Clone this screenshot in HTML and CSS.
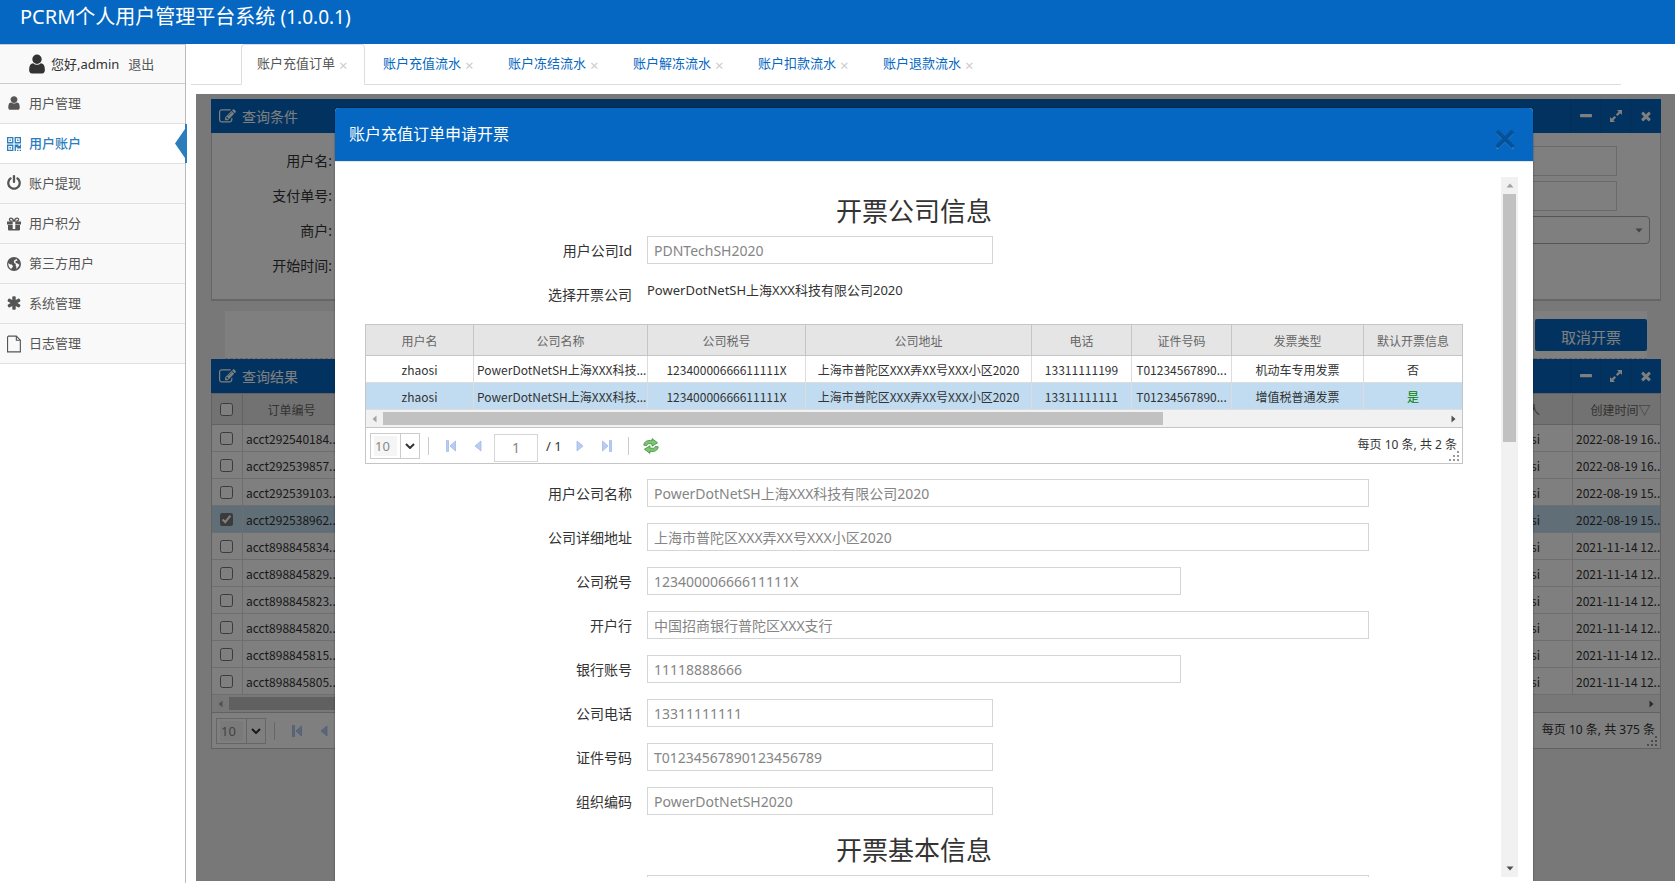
FILE: index.html
```html
<!DOCTYPE html>
<html lang="zh-CN">
<head>
<meta charset="utf-8">
<title>PCRM个人用户管理平台系统</title>
<link rel="stylesheet" href="styles.css">
</head>
<body>
<svg class="sprite" aria-hidden="true">
  <symbol id="i-user" viewBox="0 0 1792 1792"><path d="M1536 1399q0 109-62.5 187t-150.5 78h-854q-88 0-150.5-78t-62.5-187q0-85 8.5-160.5t31.5-152 58.5-131 94-89 134.5-34.5q131 128 313 128t313-128q76 0 134.5 34.5t94 89 58.5 131 31.5 152 8.5 160.5zm-256-887q0 159-112.5 271.5t-271.5 112.5-271.5-112.5-112.5-271.5 112.5-271.5 271.5-112.5 271.5 112.5 112.5 271.5z"/></symbol>
  <symbol id="i-qrcode" viewBox="0 0 14 14"><path fill-rule="evenodd" d="M0 0h6.400v6.400H0zM1.300 1.300v3.800h3.800V1.300zM2.500 2.500h1.400v1.400H2.500zM7.600 0H14v6.400H7.600zM8.900 1.300v3.800h3.800V1.300zM10.100 2.500h1.400v1.400h-1.400zM0 7.600h6.400V14H0zM1.300 8.900v3.800h3.800V8.900zM2.500 10.100h1.400v1.400H2.500zM7.600 7.600h3.900v1.300h1.300V7.600H14v3.900h-3.800v-1.300H8.900V14H7.600zM10.200 12.700h1.300V14h-1.300zM12.700 12.700H14V14h-1.300z"/></symbol>
  <symbol id="i-power" viewBox="0 0 1792 1792"><path d="M1664 896q0 156-61 298t-164 245-245 164-298 61-298-61-245-164-164-245-61-298q0-182 80.500-343t226.500-270q43-32 95.500-25t83.500 50q32 42 24.500 94.500t-49.500 84.500q-98 74-151.500 181t-53.500 228q0 104 40.500 198.500t109.500 163.500 163.500 109.500 198.500 40.500 198.500-40.500 163.500-109.500 109.500-163.500 40.500-198.500q0-121-53.500-228t-151.500-181q-42-32-49.500-84.500t24.500-94.500q31-43 84-50t95 25q146 109 226.500 270t80.500 343zm-640-768v640q0 52-38 90t-90 38-90-38-38-90v-640q0-52 38-90t90-38 90 38 38 90z"/></symbol>
  <symbol id="i-gift" viewBox="0 0 14 14"><path fill-rule="evenodd" d="M1 8h4.700v5.500H2a1 1 0 0 1-1-1zM8.300 8H13v4.500a1 1 0 0 1-1 1H8.300zM0 4.500h5.700V7.500H0zM8.300 4.500H14V7.500H8.300zM5.700 12h2.600v1.500H5.700zM4 .5c1.300 0 2.200.9 3 2.200C7.800 1.400 8.700.5 10 .5c1.300 0 2.200.9 2.200 2.100S11.200 4.700 10 4.700H4C2.800 4.700 1.800 3.800 1.800 2.600S2.700.5 4 .5zM4 1.700c-.6 0-1 .4-1 .9s.4.900 1 .9h1.900C5.300 2.500 4.700 1.700 4 1.700zM10 1.700c-.7 0-1.300.8-1.900 1.800H10c.6 0 1-.4 1-.9s-.4-.9-1-.9z"/></symbol>
  <symbol id="i-globe" viewBox="0 0 14 14"><path fill-rule="evenodd" d="M7 0a7 7 0 1 1 0 14A7 7 0 0 1 7 0zM9 1.600l1.200 1.300.2 1.200-1.200-.4-.9 1 .5 1.200 1.500.3 1 1.300 1-.7c0 2.300-1.300 4.200-3.300 5.100l.5-1.900-.9-1.400.3-1.500-1.500-.9-.6-1.600.6-1.300 1.400-.8zM1.400 6l1.300 1.200 1.900.4 1.400 1.300-.6 1.500-1 .9.100 1C2.500 11.300 1.300 9.200 1.300 7z"/></symbol>
  <symbol id="i-asterisk" viewBox="0 0 1792 1792"><path d="M1546 1050q46 26 59.500 77.500t-12.500 97.500l-64 110q-26 46-77.500 59.500t-97.500-12.500l-266-153v307q0 52-38 90t-90 38h-128q-52 0-90-38t-38-90v-307l-266 153q-46 26-97.500 12.500t-77.500-59.500l-64-110q-26-46-12.500-97.500t59.500-77.500l266-154-266-154q-46-26-59.500-77.500t12.500-97.500l64-110q26-46 77.500-59.500t97.500 12.500l266 153v-307q0-52 38-90t90-38h128q52 0 90 38t38 90v307l266-153q46-26 97.500-12.500t77.500 59.500l64 110q26 46 12.500 97.500t-59.500 77.500l-266 154z"/></symbol>
  <symbol id="i-file" viewBox="0 0 15 18"><path d="M1.500.600h8.500l4.300 4.300v12.500H.600V1.500zM10 .600v4.400h4.400" fill="none" stroke="currentColor" stroke-width="1.200"/></symbol>
  <symbol id="i-edit" viewBox="0 0 1792 1792"><path d="M888 1184l116-116-152-152-116 116v56h96v96h56zm440-720q-16-16-33 1l-350 350q-17 17-1 33t33-1l350-350q17-17 1-33zm80 594v190q0 119-84.500 203.500t-203.500 84.500h-832q-119 0-203.500-84.500t-84.500-203.500v-832q0-119 84.500-203.500t203.500-84.500h832q63 0 117 25 15 7 18 23 3 17-9 29l-49 49q-14 14-32 8-23-6-45-6h-832q-66 0-113 47t-47 113v832q0 66 47 113t113 47h832q66 0 113-47t47-113v-126q0-13 9-22l64-64q15-15 35-7t20 29zm-96-738l288 288-672 672h-288v-288zm444 132l-92 92-288-288 92-92q28-28 68-28t68 28l152 152q28 28 28 68t-28 68z"/></symbol>
  <symbol id="i-minus" viewBox="0 0 14 14"><path d="M2 5h10a1 1 0 0 1 1 1v1.500a.7.7 0 0 1-.7.700H1.700a.7.7 0 0 1-.7-.7V6a1 1 0 0 1 1-1z"/></symbol>
  <symbol id="i-expand" viewBox="0 0 14 14"><path d="M8 1h5v5l-1.700-1.700-2.800 2.800-1.600-1.600 2.800-2.800zM6 13H1V8l1.700 1.700 2.800-2.800 1.600 1.600-2.800 2.800z"/></symbol>
  <symbol id="i-times" viewBox="0 0 1792 1792"><path d="M1490 1322q0 40-28 68l-136 136q-28 28-68 28t-68-28l-294-294-294 294q-28 28-68 28t-68-28l-136-136q-28-28-28-68t28-68l294-294-294-294q-28-28-28-68t28-68l136-136q28-28 68-28t68 28l294 294 294-294q28-28 68-28t68 28l136 136q28 28 28 68t-28 68l-294 294 294 294q28 28 28 68z"/></symbol>
  <symbol id="i-prev" viewBox="0 0 16 16"><path d="M11 3v10L5 8z" fill="#b9ccf2" stroke="#a3b9ea" stroke-width=".8"/></symbol>
  <symbol id="i-first" viewBox="0 0 16 16"><path d="M3.500 2.500h2v11h-2zM12.500 3v10L7 8z" fill="#b9ccf2" stroke="#a3b9ea" stroke-width=".8"/></symbol>
  <symbol id="i-next" viewBox="0 0 16 16"><path d="M5 3v10l6-5z" fill="#b9ccf2" stroke="#a3b9ea" stroke-width=".8"/></symbol>
  <symbol id="i-last" viewBox="0 0 16 16"><path d="M10.500 2.500h2v11h-2zM3.500 3v10L9 8z" fill="#b9ccf2" stroke="#a3b9ea" stroke-width=".8"/></symbol>
  <symbol id="i-refresh" viewBox="0 0 16 16"><path d="M.8 7.200C1 3.600 4.600 1.800 9 2.600V.600l5.600 4.200L9 8.200V6C6 5.200 4.400 5.700 3.800 7.500zM15.200 8.800c-.2 3.600-3.800 5.400-8.200 4.600v2L1.400 11.200 7 7.800V10c3 .8 4.600.3 5.200-1.500z" fill="#7cc472" stroke="#3f8f3c" stroke-width=".8"/></symbol>
  <symbol id="i-grip" viewBox="0 0 10 10"><path d="M8 0h2v2H8zM4 4h2v2H4zM8 4h2v2H8zM0 8h2v2H0zM4 8h2v2H4zM8 8h2v2H8z"/></symbol>
  <symbol id="i-left" viewBox="0 0 5 8"><path d="M4.500.500v7L.500 4z"/></symbol>
  <symbol id="i-right" viewBox="0 0 5 8"><path d="M.500.500v7l4-3.500z"/></symbol>
  <symbol id="i-up" viewBox="0 0 8 5"><path d="M.500 4.500h7L4 .500z"/></symbol>
  <symbol id="i-down" viewBox="0 0 8 5"><path d="M.500.500h7L4 4.500z"/></symbol>
</svg>

<header class="topbar"><h1>PCRM个人用户管理平台系统 <small>(1.0.0.1)</small></h1></header>

<div class="layout">
  <aside class="sidebar">
    <div class="who"><svg class="who-icon"><use href="#i-user"/></svg><span>您好,admin</span><a href="#">退出</a></div>
    <nav>
      <a href="#"><svg><use href="#i-user"/></svg>用户管理</a>
      <a href="#" class="active"><svg class="s14"><use href="#i-qrcode"/></svg>用户账户
        <svg class="notch" viewBox="0 0 12 39"><path d="M10 0h2v39h-2v-5L0 19.500 10 5z"/></svg></a>
      <a href="#"><svg><use href="#i-power"/></svg>账户提现</a>
      <a href="#"><svg class="s14"><use href="#i-gift"/></svg>用户积分</a>
      <a href="#"><svg class="s14"><use href="#i-globe"/></svg>第三方用户</a>
      <a href="#"><svg><use href="#i-asterisk"/></svg>系统管理</a>
      <a href="#"><svg class="s14"><use href="#i-file"/></svg>日志管理</a>
    </nav>
  </aside>

  <main class="main">
    <nav class="tabs">
      <a href="#" class="current">账户充值订单<span>×</span></a>
      <a href="#">账户充值流水<span>×</span></a>
      <a href="#">账户冻结流水<span>×</span></a>
      <a href="#">账户解冻流水<span>×</span></a>
      <a href="#">账户扣款流水<span>×</span></a>
      <a href="#">账户退款流水<span>×</span></a>
    </nav>

    <div class="frame">
      <section class="panel">
        <div class="panel-head"><svg class="edit"><use href="#i-edit"/></svg><h2>查询条件</h2>
          <button aria-label="最小化"><svg><use href="#i-minus"/></svg></button><button aria-label="展开"><svg><use href="#i-expand"/></svg></button><button aria-label="关闭"><svg><use href="#i-times"/></svg></button></div>
        <div class="filters">
          <div class="filter"><label for="f1">用户名:</label><input id="f1"></div>
          <div class="filter"><label for="f2">支付单号:</label><input id="f2"></div>
          <div class="filter wide"><label for="f3">商户:</label><span class="combo"><select id="f3"><option></option></select><svg><use href="#i-down"/></svg></span></div>
          <div class="filter"><label>开始时间:</label></div>
        </div>
      </section>

      <div class="actions"><button>取消开票</button></div>

      <section class="panel results">
        <div class="panel-head"><svg class="edit"><use href="#i-edit"/></svg><h2>查询结果</h2>
          <button aria-label="最小化"><svg><use href="#i-minus"/></svg></button><button aria-label="展开"><svg><use href="#i-expand"/></svg></button><button aria-label="关闭"><svg><use href="#i-times"/></svg></button></div>
        <div class="grid">
          <table class="orders">
            <colgroup><col class="c-check"><col class="c-id"><col><col class="c-by"><col class="c-time"></colgroup>
            <thead><tr><th><input type="checkbox" aria-label="全选"></th><th>订单编号</th><th></th><th>创建人</th><th>创建时间▽</th></tr></thead>
            <tbody>
              <tr><td><input type="checkbox" aria-label="选择"></td><td>acct292540184...</td><td></td><td>zhaosi</td><td>2022-08-19 16...</td></tr>
              <tr><td><input type="checkbox" aria-label="选择"></td><td>acct292539857...</td><td></td><td>zhaosi</td><td>2022-08-19 16...</td></tr>
              <tr><td><input type="checkbox" aria-label="选择"></td><td>acct292539103...</td><td></td><td>zhaosi</td><td>2022-08-19 15...</td></tr>
              <tr class="picked"><td><input type="checkbox" aria-label="选择" checked></td><td>acct292538962...</td><td></td><td>zhaosi</td><td>2022-08-19 15...</td></tr>
              <tr><td><input type="checkbox" aria-label="选择"></td><td>acct898845834...</td><td></td><td>zhaosi</td><td>2021-11-14 12...</td></tr>
              <tr><td><input type="checkbox" aria-label="选择"></td><td>acct898845829...</td><td></td><td>zhaosi</td><td>2021-11-14 12...</td></tr>
              <tr><td><input type="checkbox" aria-label="选择"></td><td>acct898845823...</td><td></td><td>zhaosi</td><td>2021-11-14 12...</td></tr>
              <tr><td><input type="checkbox" aria-label="选择"></td><td>acct898845820...</td><td></td><td>zhaosi</td><td>2021-11-14 12...</td></tr>
              <tr><td><input type="checkbox" aria-label="选择"></td><td>acct898845815...</td><td></td><td>zhaosi</td><td>2021-11-14 12...</td></tr>
              <tr><td><input type="checkbox" aria-label="选择"></td><td>acct898845805...</td><td></td><td>zhaosi</td><td>2021-11-14 12...</td></tr>
            </tbody>
          </table>
          <div class="hscroll"><svg class="off"><use href="#i-left"/></svg><i></i><svg><use href="#i-right"/></svg></div>
          <div class="pager">
            <span class="size"><select aria-label="每页条数"><option>10</option></select><svg viewBox="0 0 10 6"><path d="M1 1l4 4 4-4" fill="none" stroke="#333" stroke-width="2"/></svg></span>
            <span class="sep"></span>
            <button aria-label="首页"><svg><use href="#i-first"/></svg></button><button aria-label="上一页"><svg><use href="#i-prev"/></svg></button>
            <span class="total">每页 10 条, 共 375 条</span>
            <svg class="grip"><use href="#i-grip"/></svg>
          </div>
        </div>
      </section>

      <div class="backdrop">
        <div class="modal" role="dialog" aria-labelledby="mt">
          <div class="modal-head"><h3 id="mt">账户充值订单申请开票</h3>
            <button aria-label="关闭"><svg viewBox="0 0 20 20"><path d="M2 4l16 16M18 4L2 20" stroke="#3f8bd2" stroke-width="2"/><path d="M2 2l16 16M18 2L2 18" stroke="#04529a" stroke-width="4"/></svg></button></div>
          <div class="modal-body">
            <form class="form">
              <h4>开票公司信息</h4>
              <div class="row"><label for="a1">用户公司Id</label><input id="a1" class="w4" value="PDNTechSH2020"></div>
              <div class="row"><label>选择开票公司</label><p>PowerDotNetSH上海XXX科技有限公司2020</p></div>
              <div class="grid companies">
                <table>
                  <colgroup><col class="k1"><col class="k2"><col class="k3"><col class="k4"><col class="k5"><col class="k5"><col class="k6"><col></colgroup>
                  <thead><tr><th>用户名</th><th>公司名称</th><th>公司税号</th><th>公司地址</th><th>电话</th><th>证件号码</th><th>发票类型</th><th>默认开票信息</th></tr></thead>
                  <tbody>
                    <tr><td>zhaosi</td><td>PowerDotNetSH上海XXX科技...</td><td>12340000666611111X</td><td>上海市普陀区XXX弄XX号XXX小区2020</td><td>13311111199</td><td>T01234567890...</td><td>机动车专用发票</td><td>否</td></tr>
                    <tr class="picked"><td>zhaosi</td><td>PowerDotNetSH上海XXX科技...</td><td>12340000666611111X</td><td>上海市普陀区XXX弄XX号XXX小区2020</td><td>13311111111</td><td>T01234567890...</td><td>增值税普通发票</td><td class="yes">是</td></tr>
                  </tbody>
                </table>
                <div class="hscroll"><svg class="off"><use href="#i-left"/></svg><i></i><svg><use href="#i-right"/></svg></div>
                <div class="pager">
                  <span class="size"><select aria-label="每页条数"><option>10</option></select><svg viewBox="0 0 10 6"><path d="M1 1l4 4 4-4" fill="none" stroke="#333" stroke-width="2"/></svg></span>
                  <span class="sep"></span>
                  <button type="button" aria-label="首页"><svg><use href="#i-first"/></svg></button><button type="button" aria-label="上一页"><svg><use href="#i-prev"/></svg></button>
                  <input class="page" aria-label="页码" value="1"><span class="of">/ 1</span>
                  <button type="button" aria-label="下一页"><svg><use href="#i-next"/></svg></button><button type="button" aria-label="末页"><svg><use href="#i-last"/></svg></button>
                  <span class="sep"></span>
                  <button type="button" aria-label="刷新"><svg><use href="#i-refresh"/></svg></button>
                  <span class="total">每页 10 条, 共 2 条</span>
                  <svg class="grip"><use href="#i-grip"/></svg>
                </div>
              </div>
              <div class="row"><label for="b1">用户公司名称</label><input id="b1" class="w8" value="PowerDotNetSH上海XXX科技有限公司2020"></div>
              <div class="row"><label for="b2">公司详细地址</label><input id="b2" class="w8" value="上海市普陀区XXX弄XX号XXX小区2020"></div>
              <div class="row"><label for="b3">公司税号</label><input id="b3" class="w6" value="12340000666611111X"></div>
              <div class="row"><label for="b4">开户行</label><input id="b4" class="w8" value="中国招商银行普陀区XXX支行"></div>
              <div class="row"><label for="b5">银行账号</label><input id="b5" class="w6" value="11118888666"></div>
              <div class="row"><label for="b6">公司电话</label><input id="b6" class="w4" value="13311111111"></div>
              <div class="row"><label for="b7">证件号码</label><input id="b7" class="w4" value="T01234567890123456789"></div>
              <div class="row"><label for="b8">组织编码</label><input id="b8" class="w4" value="PowerDotNetSH2020"></div>
              <h4>开票基本信息</h4>
              <div class="row"><span></span><input class="w8" aria-label="开票基本信息"></div>
            </form>
            <div class="vscroll"><svg class="off"><use href="#i-up"/></svg><i></i><svg><use href="#i-down"/></svg></div>
          </div>
        </div>
      </div>
    </div>
  </main>
</div>
</body>
</html>
```
FILE: styles.css
```css
* { box-sizing: border-box; }
body {
  margin: 0; height: 100vh; display: flex; flex-direction: column; overflow: hidden;
  font: 13px/20px "Noto Sans", "Noto Sans CJK SC", sans-serif; color: #333; background: #fff;
}
.sprite { display: none; }
svg { fill: currentColor; flex: none; }
h1, h2, h3, h4, p { margin: 0; font-weight: 400; }
a { color: inherit; text-decoration: none; }
button { font: inherit; border: 0; background: none; padding: 0; color: inherit; }
input, select { font: inherit; border-radius: 0; margin: 0; outline: 0; }

.topbar { height: 44px; background: #0567c1; color: #fff; padding: 0 20px; flex: none; }
.topbar h1 { font-size: 20px; line-height: 34px; }
.topbar small { font-size: 19px; }
.layout { flex: 1; display: flex; min-height: 0; }

.sidebar { width: 186px; flex: none; border-right: 1px solid #bbb; border-top: 1px solid #ccc; }
.who { height: 39px; display: flex; align-items: center; padding-left: 26px; background: #f9f9f9; border-bottom: 1px solid #ccc; }
.who-icon { width: 22px; height: 22px; margin-right: 3px; }
.who a { margin-left: 9px; color: #555; }
.sidebar nav a {
  position: relative; height: 40px; display: flex; align-items: center; gap: 7px; padding: 0 0 2px 6px;
  background: #f9f9f9; border-bottom: 1px solid #e0e0e0; color: #555;
}
.sidebar nav svg { width: 16px; height: 18px; }
.sidebar nav .s14 { width: 14px; height: 18px; margin: 2px 1px 0; }
.sidebar nav a.active { background: #fff; color: #2b7dbc; font-weight: 500; }
.sidebar nav .notch { position: absolute; right: -2px; top: 0; width: 12px; height: 39px; margin: 0; fill: #2b7dbc; }

.main { flex: 1; min-width: 0; display: flex; flex-direction: column; }
.tabs { display: flex; gap: 1px; margin: 0 54px 0 5px; padding-left: 50px; height: 41px; border-bottom: 1px solid #ddd; flex: none; }
.tabs a { width: 124px; height: 41px; padding: 0 17px; line-height: 39px; color: #0567c1; white-space: nowrap; display: flex; }
.tabs a span { color: #ccc; margin-left: 4px; font-size: 15px; line-height: 42px; }
.tabs .current { color: #555; border: 1px solid #ddd; border-bottom-color: #fff; border-radius: 4px 4px 0 0; background: #fff; padding: 0 15px; line-height: 37px; }
.tabs .current span { line-height: 40px; }

.frame { position: relative; flex: 1; min-height: 0; overflow: hidden; margin: 9px 0 2px 10px; padding: 5px 14px 0 15px; background: #f0f0f0; }
.panel-head { height: 34px; display: flex; align-items: center; background: #0567c1; color: #fff; padding: 0 1px 0 8px; }
.panel-head h2 { flex: 1; font-size: 14px; line-height: 34px; padding-top: 1px; }
.panel-head .edit { width: 17px; height: 17px; margin-right: 6px; }
.panel-head button { width: 30px; height: 34px; display: flex; align-items: center; justify-content: center; border-left: 1px solid #045cae; }
.panel-head button svg { width: 14px; height: 14px; }
.filters { background: #fff; border: 1px solid #ccc; border-top: 0; border-bottom-width: 2px; padding: 13px 43px 18px 0; display: grid; gap: 5px; }
.filter { display: flex; height: 30px; }
.filter label { width: 120px; text-align: right; font-size: 14px; line-height: 30px; margin-right: 8px; }
.filter input { flex: 1; border: 1px solid #d5d5d5; }
.filter.wide { margin-right: -33px; }
.combo { flex: 1; position: relative; height: 28px; }
.combo select { width: 100%; height: 28px; border: 1px solid #aaa; border-radius: 4px; appearance: none; background: #fff; }
.combo svg { position: absolute; right: 7px; top: 12px; width: 8px; height: 5px; color: #888; }
.actions { margin: 10px 14px 0; height: 48px; background: #fff; border-bottom: 1px dashed #ccc; display: flex; justify-content: flex-end; align-items: center; }
.actions button { width: 112px; height: 32px; background: #0567c1; color: #fff; border-radius: 2px; font-size: 15px; line-height: 36px; }

.grid { border: 1px solid #c5c5c5; background: #fff; font-family: "Noto Sans CJK SC", sans-serif; font-size: 12px; }
.grid table { width: 100%; table-layout: fixed; border-collapse: separate; border-spacing: 0; }
.grid th { height: 31px; padding: 2px 0 0; font-weight: 400; color: #666; background: #e5e5e5; border-right: 1px solid #c5c5c5; border-bottom: 1px solid #c5c5c5; }
.grid td { height: 27px; padding: 2px 3px 0; line-height: 20px; text-align: center; white-space: nowrap; overflow: hidden; border-right: 1px solid #ddd; border-bottom: 1px solid #ddd; }
.grid th:last-child, .grid td:last-child { border-right: 0; }
.grid .picked td { background: #c1dcf0; }
.grid .yes { color: #008000; }
.grid input[type=checkbox] { width: 13px; height: 13px; display: block; margin: 0 auto; accent-color: #767676; }
.orders th:first-child, .orders td:first-child { padding: 0 1px 0 0; }
.orders td:nth-child(2), .orders td:last-child { text-align: left; }
.orders th:last-child { padding-left: 8px; }
.c-check { width: 31px; } .c-id { width: 98px; } .c-by { width: 101px; } .c-time { width: 87px; }
.k1 { width: 108px; } .k2 { width: 174px; } .k3 { width: 158px; } .k4 { width: 226px; } .k5 { width: 100px; } .k6 { width: 132px; }

.hscroll { height: 18px; display: flex; align-items: center; justify-content: space-between; background: #f1f1f1; border-bottom: 1px solid #c5c5c5; padding: 0 6px; gap: 6px; color: #505050; }
.hscroll svg { width: 5px; height: 8px; }
.hscroll i { width: 72%; height: 13px; background: #c1c1c1; margin-right: auto; }
.hscroll .off, .vscroll .off { color: #a3a3a3; }
.pager { position: relative; height: 35px; display: flex; align-items: center; padding: 0 5px 0 4px; font-family: "Noto Sans", "Noto Sans CJK SC", sans-serif; }
.size { position: relative; width: 50px; height: 26px; border: 1px solid #ccc; display: flex; align-items: center; }
.size select { width: 100%; height: 20px; border: 0; padding: 0 0 0 4px; appearance: none; font-size: 13px; color: #888; background: linear-gradient(90deg, #fff 3px, #f5f5f5 3px, #f5f5f5 26px, #fff 26px); }
.size::after { content: ""; position: absolute; left: 29px; top: 0; bottom: 0; border-left: 1px solid #ccc; }
.size svg { position: absolute; right: 4px; top: 9px; width: 10px; height: 6px; }
.sep { width: 1px; height: 18px; background: #ccc; margin: 0 8px; }
.pager button { width: 27px; height: 20px; display: flex; align-items: center; justify-content: center; }
.pager button svg { width: 16px; height: 16px; }
.page { width: 44px; height: 28px; border: 1px solid #d5d5d5; text-align: center; font-size: 14px; color: #858585; margin: 4px 8px 0 3px; }
.of { width: 20px; font-size: 13px; }
.total { margin-left: auto; padding-bottom: 2px; }
.grip { position: absolute; right: 3px; bottom: 2px; width: 10px; height: 10px; color: #999; }

.backdrop { position: absolute; inset: 0; padding: 14px 142px 0 139px; background: rgba(0, 0, 0, .5); display: flex; }
.modal { flex: 1; min-width: 0; display: flex; flex-direction: column; background: #fff; border-radius: 4px 4px 0 0; box-shadow: 0 0 2px rgba(0, 0, 0, .5); overflow: hidden; }
.modal-head { height: 54px; flex: none; display: flex; align-items: center; justify-content: space-between; background: #0567c1; color: #fff; border-bottom: 1px solid #e5e5e5; padding: 0 18px 0 14px; }
.modal-head h3 { font-size: 16px; line-height: 50px; padding-bottom: 2px; }
.modal-head button { padding-top: 8px; }
.modal-head button svg { width: 20px; height: 20px; display: block; }
.modal-body { flex: 1; min-height: 0; display: flex; margin: 15px 15px 4px; overflow: hidden; }
.form { flex: 1; min-width: 0; padding: 15px 23px 0 0; }
.form h4 { font-size: 26px; line-height: 38px; text-align: center; margin-bottom: 6px; }
.row { display: grid; grid-template-columns: repeat(12, 1fr); height: 28px; margin-bottom: 16px; }
.row label, .row > span { grid-column: span 3; text-align: right; font-size: 14px; line-height: 30px; }
.row p { grid-column: span 8; padding-left: 15px; }
.row input { margin: 0 15px; min-width: 0; height: 28px; border: 1px solid #d5d5d5; padding: 0 6px; font-size: 14px; color: #858585; }
.w4 { grid-column: span 4; } .w6 { grid-column: span 6; } .w8 { grid-column: span 8; }
.companies { margin: 0 15px 15px; }
.vscroll { width: 17px; flex: none; display: flex; flex-direction: column; align-items: center; justify-content: space-between; gap: 6px; background: #f1f1f1; color: #505050; padding: 6px 0; }
.vscroll svg { width: 8px; height: 5px; }
.vscroll i { width: 13px; height: 36%; background: #c1c1c1; margin-bottom: auto; }
```
